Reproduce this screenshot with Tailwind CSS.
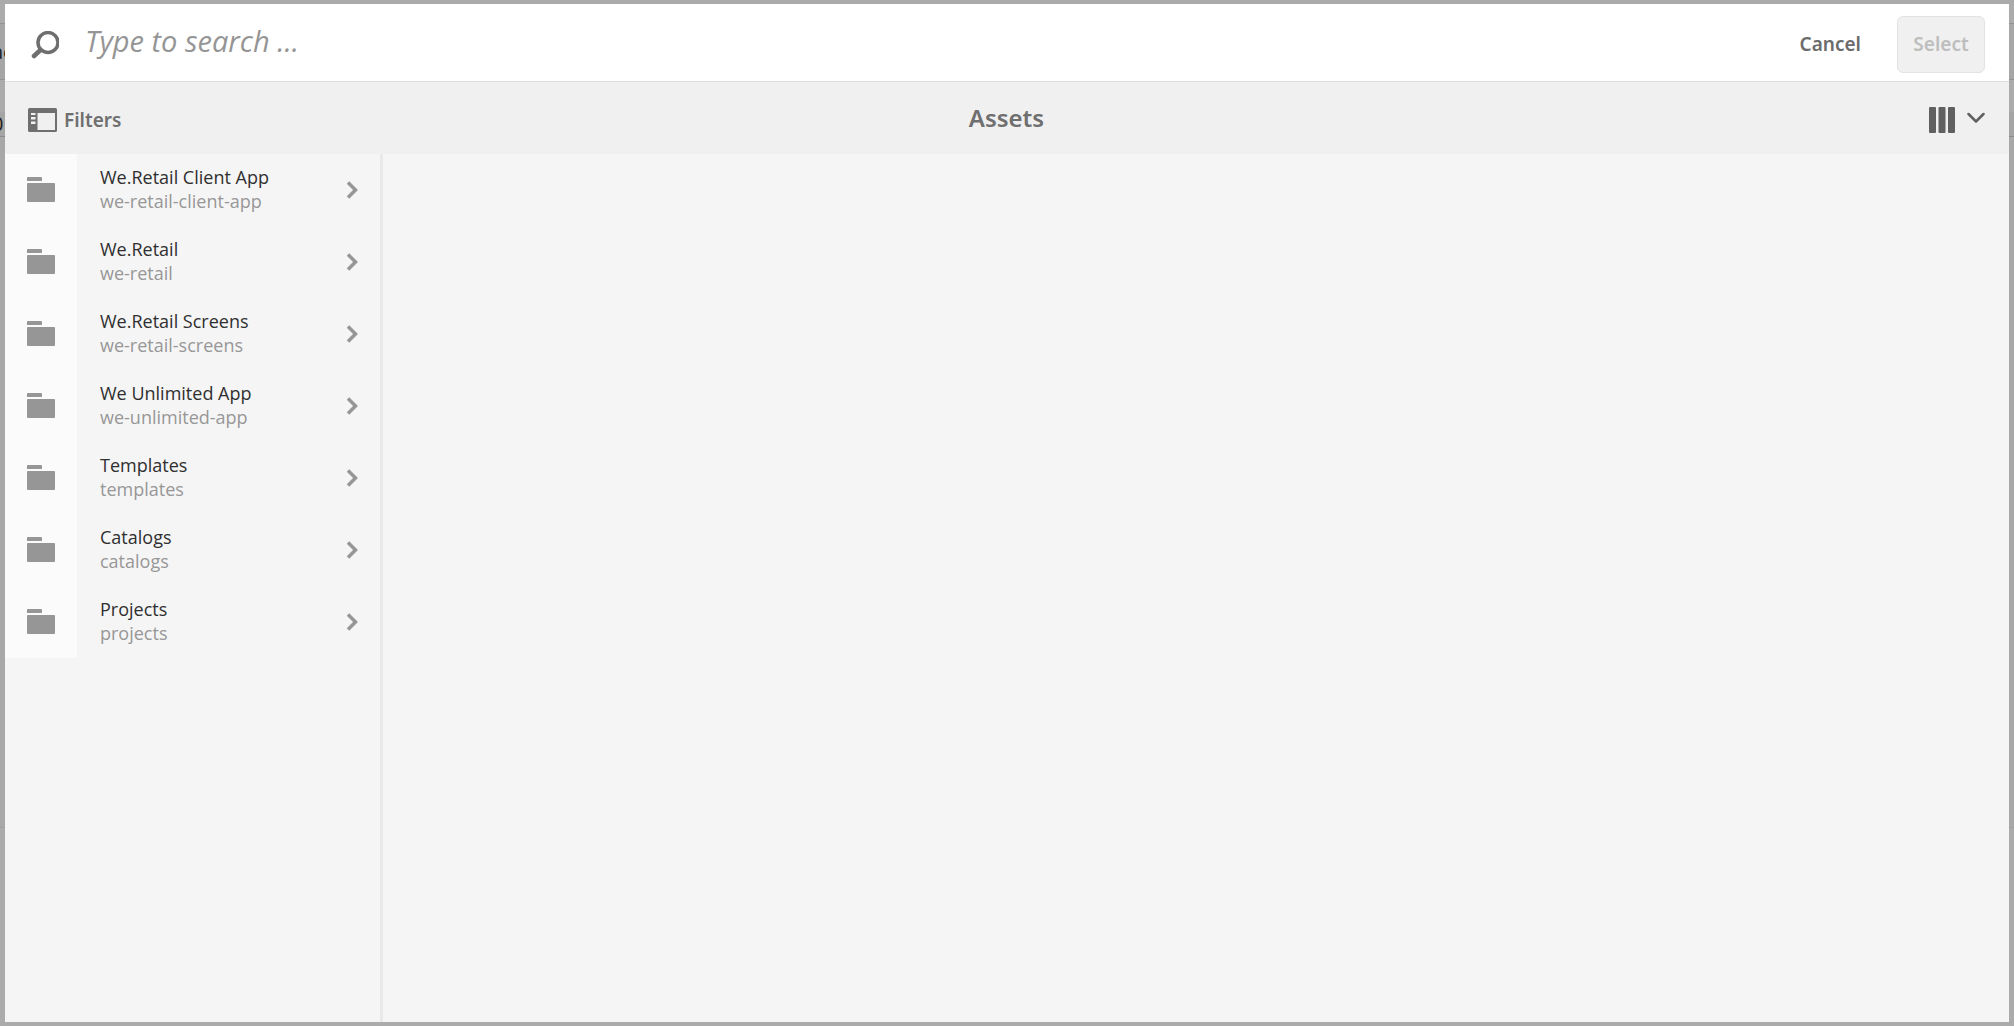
<!DOCTYPE html>
<html lang="en">
<head>
<meta charset="utf-8">
<title>Assets</title>
<script src="https://cdn.jsdelivr.net/npm/@tailwindcss/browser@4"></script>
</head>
<body class="relative h-screen overflow-hidden bg-[#ababab] font-['Open_Sans',sans-serif]">
<!-- dimmed page under the dialog -->
<div class="absolute inset-0 flex flex-col text-[20px] leading-none text-[#222]" aria-hidden="true">
  <div class="h-6 border-b border-[#929292]"></div>
  <div class="flex h-14 items-center border-b border-[#929292] bg-[#a6a6a6]"><span class="-ml-2">ac</span></div>
  <div class="h-8"></div>
  <div class="flex h-[25px] items-center border-b border-[#8a8a8a] bg-[#a5a5a5]"><span class="-ml-2">0</span></div>
  <div class="h-[691px] border-b border-[#a0a0a0] bg-[#a8a8a8]"></div>
</div>

<div class="relative flex h-screen px-[5px] py-1">
<main role="dialog" aria-label="Assets" class="flex min-w-0 flex-1 flex-col bg-[#f5f5f5]">
  <form class="flex h-[78px] items-center border-b border-[#dfdfdf] bg-white pt-1 pr-6 pl-[26px]">
    <label for="q" class="shrink-0" aria-label="Search">
      <svg class="h-7 w-7" viewBox="0 0 28 28" fill="none" stroke="#6e6e6e"><circle cx="17" cy="11.500" r="10" stroke-width="3.500"/><path d="M9.500 19L3 25" stroke-width="4.500" stroke-linecap="round"/></svg>
    </label>
    <input id="q" type="search" placeholder="Type to search ..." class="ml-[26px] h-14 min-w-0 flex-1 bg-transparent pb-2 text-[29px] italic text-[#444] outline-none placeholder:text-[#959595]">
    <button type="button" class="h-14 px-4 font-['Noto_Sans',sans-serif] text-[19px] font-semibold text-[#6b6b6b]">Cancel</button>
    <button type="button" disabled class="ml-5 h-[57px] w-22 rounded-md border border-[#e3e3e3] bg-[#f0f0f0] font-['Noto_Sans',sans-serif] text-[19px] font-semibold text-[#bebebe]">Select</button>
  </form>

  <header class="grid h-[72px] shrink-0 grid-cols-3 items-center bg-[#f0f0f0] pr-6 pl-[23px] font-['Noto_Sans',sans-serif] text-[#6f6f6f]">
    <button type="button" class="flex items-center gap-[7px] justify-self-start pt-1 text-[19px] font-semibold">
      <svg class="h-6 w-[29px]" viewBox="0 0 29 24" fill="#6f6f6f"><path fill-rule="evenodd" d="M1.500 0h26A1.500 1.500 0 0 1 29 1.500v21a1.500 1.500 0 0 1-1.500 1.500h-26A1.500 1.500 0 0 1 0 22.500v-21A1.500 1.500 0 0 1 1.500 0zM9.500 5v17h17.500V5zM3 5v2h4.500V5zM3 9v2.500h4.500V9zM3 13.500v2.500h4.500v-2.500z"/></svg>
      Filters
    </button>
    <h1 class="justify-self-center text-[24px] font-semibold">Assets</h1>
    <button type="button" aria-label="Column view" class="flex items-center gap-3 justify-self-end">
      <svg class="mt-1 h-[26px] w-[26px]" viewBox="0 0 26 26" fill="#606060"><rect width="7" height="26" rx="1"/><rect x="9.500" width="7" height="26" rx="1"/><rect x="19" width="7" height="26" rx="1"/></svg>
      <svg class="h-3 w-[18px]" viewBox="0 0 18 12" fill="none" stroke="#606060" stroke-width="2.500" stroke-linecap="round" stroke-linejoin="round"><path d="M1.500 2L9 9.500L16.500 2"/></svg>
    </button>
  </header>

  <div class="flex min-h-0 flex-1">
    <nav aria-label="Folders" class="w-[378px] shrink-0 border-r-3 border-[#e8e8e8]">
      <ul id="folders"></ul>
    </nav>
    <section class="flex-1"></section>
  </div>
</main>
</div>

<template id="row">
  <li><a href="#" class="flex h-[72px] items-center pr-[22px]">
    <span class="flex h-full w-[72px] items-center bg-[#fbfbfb] pb-px pl-[22px]">
      <svg class="h-[25px] w-7" viewBox="0 0 28 25" fill="#969696"><path d="M1 0h13a1 1 0 0 1 1 1v3H0V1a1 1 0 0 1 1-1z"/><rect y="6" width="28" height="19" rx="1"/></svg>
    </span>
    <span class="ml-[23px] flex-1 pb-0.5 text-[18px] leading-6">
      <span class="title block text-[#2f2f2f]"></span>
      <span class="name block text-[#979797]"></span>
    </span>
    <svg class="h-[18px] w-3" viewBox="0 0 12 18" fill="none" stroke="#969696" stroke-width="3.500"><path d="M2 1.500L9.500 9L2 16.500"/></svg>
  </a></li>
</template>
<script>
const folders = [
  ["We.Retail Client App", "we-retail-client-app"],
  ["We.Retail", "we-retail"],
  ["We.Retail Screens", "we-retail-screens"],
  ["We Unlimited App", "we-unlimited-app"],
  ["Templates", "templates"],
  ["Catalogs", "catalogs"],
  ["Projects", "projects"],
];
const list = document.getElementById("folders");
for (const [title, name] of folders) {
  const row = document.getElementById("row").content.cloneNode(true);
  row.querySelector(".title").textContent = title;
  row.querySelector(".name").textContent = name;
  list.append(row);
}
</script>
</body>
</html>
